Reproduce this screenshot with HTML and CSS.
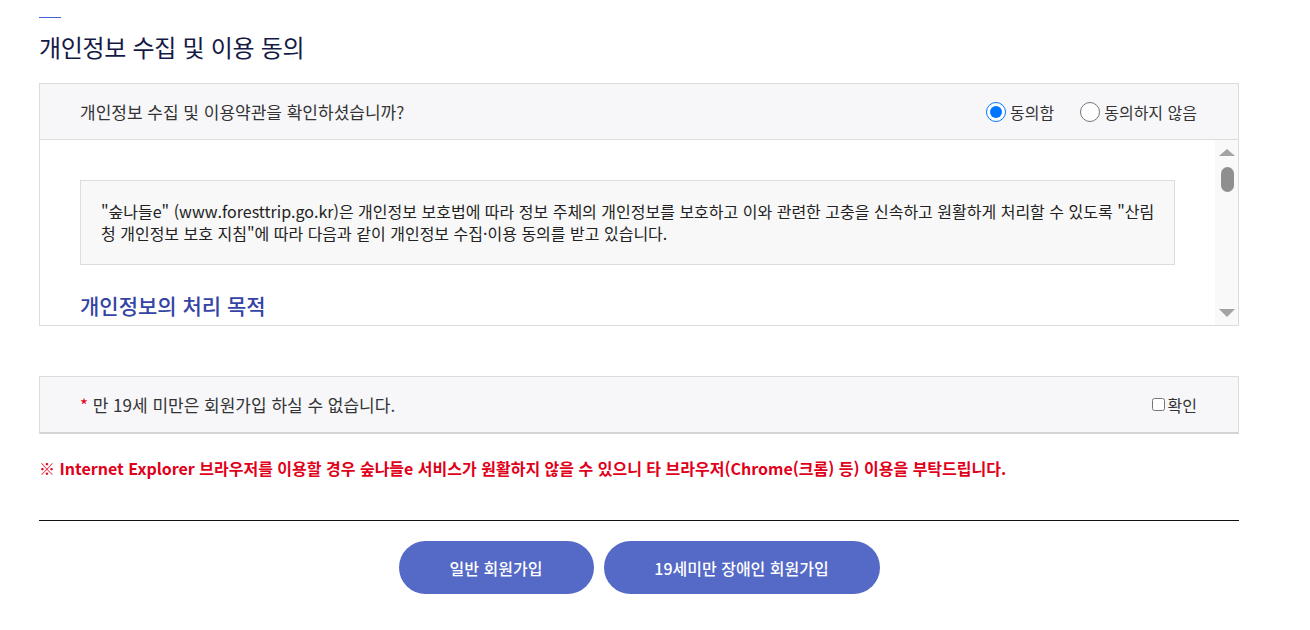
FILE: index.html
```html
<!DOCTYPE html>
<html lang="ko">
<head>
<meta charset="utf-8">
<link rel="stylesheet" href="styles.css">
</head>
<body>
<div class="page">
  <div class="title-bar"></div>
  <h2 class="title">개인정보 수집 및 이용 동의</h2>

  <div class="agree-box">
    <div class="agree-head">
      <span class="q">개인정보 수집 및 이용약관을 확인하셨습니까?</span>
      <div class="radios">
        <label class="radio"><input type="radio" name="ag" checked>동의함</label>
        <label class="radio"><input type="radio" name="ag">동의하지 않음</label>
      </div>
    </div>
    <div class="terms">
      <div class="terms-body">
        <div class="notice">"숲나들e" (www.foresttrip.go.kr)은 개인정보 보호법에 따라 정보 주체의 개인정보를 보호하고 이와 관련한 고충을 신속하고 원활하게 처리할 수 있도록 "산림청 개인정보 보호 지침"에 따라 다음과 같이 개인정보 수집·이용 동의를 받고 있습니다.</div>
        <h3 class="sub">개인정보의 처리 목적</h3>
        <p class="para">숲나들e는 개인정보를 다음의 목적을 위해 처리합니다. 처리한 개인정보는 다음의 목적 이외의 용도로는 사용되지 않으며 이용 목적이 변경될 시에는 사전 동의를 구할 예정입니다.</p>
      </div>
      <div class="scrollbar">
        <span class="arrow-up"></span>
        <span class="thumb"></span>
        <span class="track-fill"></span>
        <span class="arrow-down"></span>
      </div>
    </div>
  </div>

  <div class="age-box">
    <span class="q"><span class="star">*</span> 만 19세 미만은 회원가입 하실 수 없습니다.</span>
    <label class="check"><input type="checkbox">확인</label>
  </div>

  <p class="warn">※ Internet Explorer 브라우저를 이용할 경우 숲나들e 서비스가 원활하지 않을 수 있으니 타 브라우저(Chrome(크롬) 등) 이용을 부탁드립니다.</p>

  <div class="btns">
    <button class="btn btn-a">일반 회원가입</button>
    <button class="btn btn-b">19세미만 장애인 회원가입</button>
  </div>
</div>
</body>
</html>
```
FILE: styles.css
```css
* { box-sizing: border-box; }
html, body { margin: 0; padding: 0; background: #fff; }
body {
  font-family: "Noto Sans CJK KR", "Noto Sans", sans-serif;
  color: #333;
}
.page {
  width: 1200px;
  margin-left: 39px;
  padding-top: 17px;
}
.title-bar {
  width: 22px;
  height: 1px;
  background: #4262d8;
}
.title {
  margin: 13px 0 0;
  font-size: 24px;
  font-weight: 400;
  line-height: 32px;
  color: #151a45;
  letter-spacing: -0.3px;
}
.agree-box {
  margin-top: 20px;
  border: 1px solid #dcdcdc;
}
.agree-head {
  height: 56px;
  background: #f7f7fa;
  border-bottom: 1px solid #dcdcdc;
  display: flex;
  align-items: center;
  justify-content: space-between;
  padding: 0 41px 0 40px;
}
.q {
  font-size: 17px;
  color: #333;
}
.radios {
  display: flex;
  gap: 26px;
}
.radio {
  display: flex;
  align-items: center;
  font-size: 16px;
  color: #333;
}
.radio input {
  width: 20px;
  height: 20px;
  margin: 0 4px 0 0;
}
.terms {
  height: 185px;
  display: flex;
}
.terms-body {
  flex: 1;
  min-width: 0;
  overflow: hidden;
  padding: 40px 40px 0 40px;
}
.scrollbar {
  width: 23px;
  background: #f9f9f9;
  display: flex;
  flex-direction: column;
  align-items: center;
  padding: 9px 0 8px 1px;
}
.arrow-up {
  width: 0;
  height: 0;
  border-left: 8px solid transparent;
  border-right: 8px solid transparent;
  border-bottom: 7px solid #a3a3a3;
}
.thumb {
  margin-top: 11px;
  width: 13px;
  height: 25px;
  border-radius: 7px;
  background: #8f8f8f;
}
.track-fill { flex: 1; }
.arrow-down {
  width: 0;
  height: 0;
  border-left: 8px solid transparent;
  border-right: 8px solid transparent;
  border-top: 8px solid #a3a3a3;
}
.notice {
  background: #f8f8f8;
  border: 1px solid #dcdcdc;
  padding: 19px 12px 20px 20px;
  font-size: 16px;
  line-height: 22px;
  color: #222;
}
.sub {
  margin: 25px 0 0;
  font-size: 21px;
  font-weight: 500;
  color: #3444a4;
  line-height: 30px;
}
.para {
  font-size: 16px;
  line-height: 24px;
  margin: 10px 0;
}
.age-box {
  margin-top: 50px;
  height: 58px;
  background: #f7f7fa;
  border: 1px solid #dcdcdc;
  border-bottom: 2px solid #d4d4d4;
  display: flex;
  align-items: center;
  justify-content: space-between;
  padding: 0 41px 0 40px;
}
.star { color: #e0001a; }
.check {
  display: flex;
  align-items: center;
  font-size: 16px;
  color: #333;
}
.check input {
  width: 13px;
  height: 13px;
  margin: 0 3px 0 0;
}
.warn {
  margin: 22px 0 0;
  font-size: 16px;
  font-weight: 700;
  color: #e0001a;
  line-height: 24px;
}
.btns {
  margin-top: 40px;
  border-top: 1px solid #111;
  padding-top: 20px;
  display: flex;
  justify-content: center;
  gap: 10px;
}
.btn {
  height: 53px;
  border: 0;
  border-radius: 27px;
  background: #5569c6;
  color: #fff;
  font-family: inherit;
  font-size: 16px;
  font-weight: 500;
}
.btn-a { width: 195px; }
.btn-b { width: 276px; }
```
